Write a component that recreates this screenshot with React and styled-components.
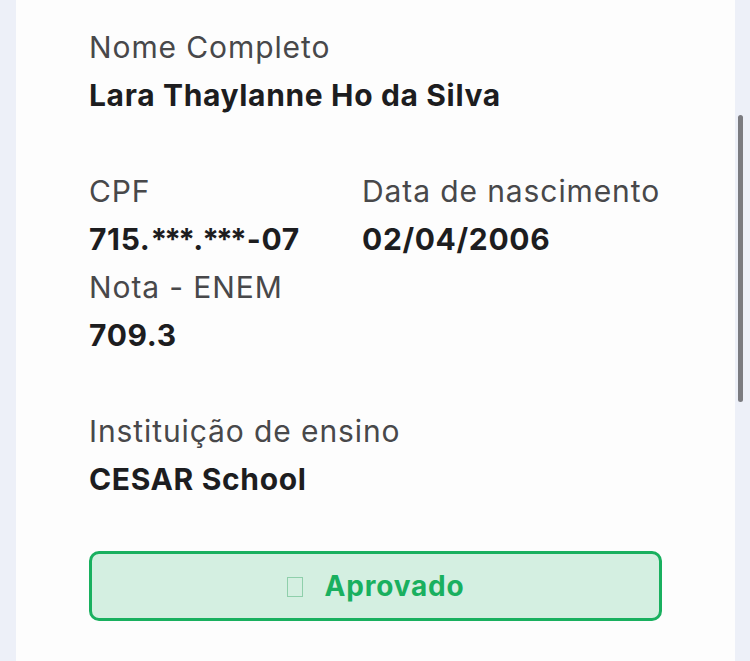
import React from "react";
import styled, { createGlobalStyle } from "styled-components";

const Global = createGlobalStyle`
  html, body { margin: 0; padding: 0; }
  body {
    background: #edf0f8;
    font-family: Inter, "Noto Sans", "Liberation Sans", sans-serif;
    overflow: hidden;
  }
`;

const Page = styled.div`
  display: flex;
  height: 661px;
  overflow: hidden;
`;

const Card = styled.main`
  margin-left: 16px;
  width: 719px;
  background: #fdfdfd;
  padding: 23px 73px 60px 73px;
  box-sizing: border-box;
  display: flex;
  flex-direction: column;
  & > * { flex-shrink: 0; }
`;

const Rail = styled.div`
  width: 15px;
  position: relative;
`;

const Thumb = styled.div`
  position: absolute;
  left: 3px;
  top: 115px;
  width: 5px;
  height: 287px;
  border-radius: 3px;
  background: #7b7b80;
`;

const Group = styled.section`
  display: flex;
  flex-direction: column;
  margin-bottom: ${(p) => (p.$gap ? "48px" : "0")};
`;

const Row = styled.div`
  display: grid;
  grid-template-columns: 273px 1fr;
`;

const Label = styled.div`
  font-size: 30px;
  line-height: 48px;
  font-weight: 400;
  letter-spacing: 0.9px;
  color: #48484a;
  white-space: nowrap;
`;

const Value = styled.div`
  font-size: 30px;
  line-height: 48px;
  font-weight: 700;
  letter-spacing: 0.65px;
  color: #1d1d1f;
  white-space: nowrap;
`;

const Mask = styled.span`
  letter-spacing: -2.9px;
  margin-right: 3px;
`;

const MaskDot = styled.span`
  letter-spacing: -1px;
  margin-left: 1px;
`;

const Status = styled.div`
  height: 70px;
  box-sizing: border-box;
  border: 3px solid #19b05f;
  border-radius: 10px;
  background: #d4efe1;
  display: flex;
  align-items: center;
  justify-content: center;
  gap: 22px;
`;

const Tofu = styled.span`
  display: inline-block;
  width: 14px;
  height: 18px;
  border: 1px solid #8fcfab;
  margin-top: 2px;
`;

const StatusText = styled.span`
  font-size: 28px;
  font-weight: 700;
  letter-spacing: 0.8px;
  color: #19b05f;
`;

const Field = ({ label, value }) => (
  <div>
    <Label>{label}</Label>
    <Value>{value}</Value>
  </div>
);

export default function App() {
  return (
    <>
      <Global />
      <Page>
        <Card>
          <Group $gap>
            <Field label="Nome Completo" value="Lara Thaylanne Ho da Silva" />
          </Group>
          <Group $gap>
            <Row>
              <Field
                label="CPF"
                value={
                  <>
                    715.
                    <Mask>
                      ***<MaskDot>.</MaskDot>***
                    </Mask>
                    -07
                  </>
                }
              />
              <Field label="Data de nascimento" value="02/04/2006" />
            </Row>
            <Field label="Nota - ENEM" value="709.3" />
          </Group>
          <Group $gap>
            <Field label="Instituição de ensino" value="CESAR School" />
          </Group>
          <Status>
            <Tofu />
            <StatusText>Aprovado</StatusText>
          </Status>
        </Card>
        <Rail>
          <Thumb />
        </Rail>
      </Page>
    </>
  );
}
